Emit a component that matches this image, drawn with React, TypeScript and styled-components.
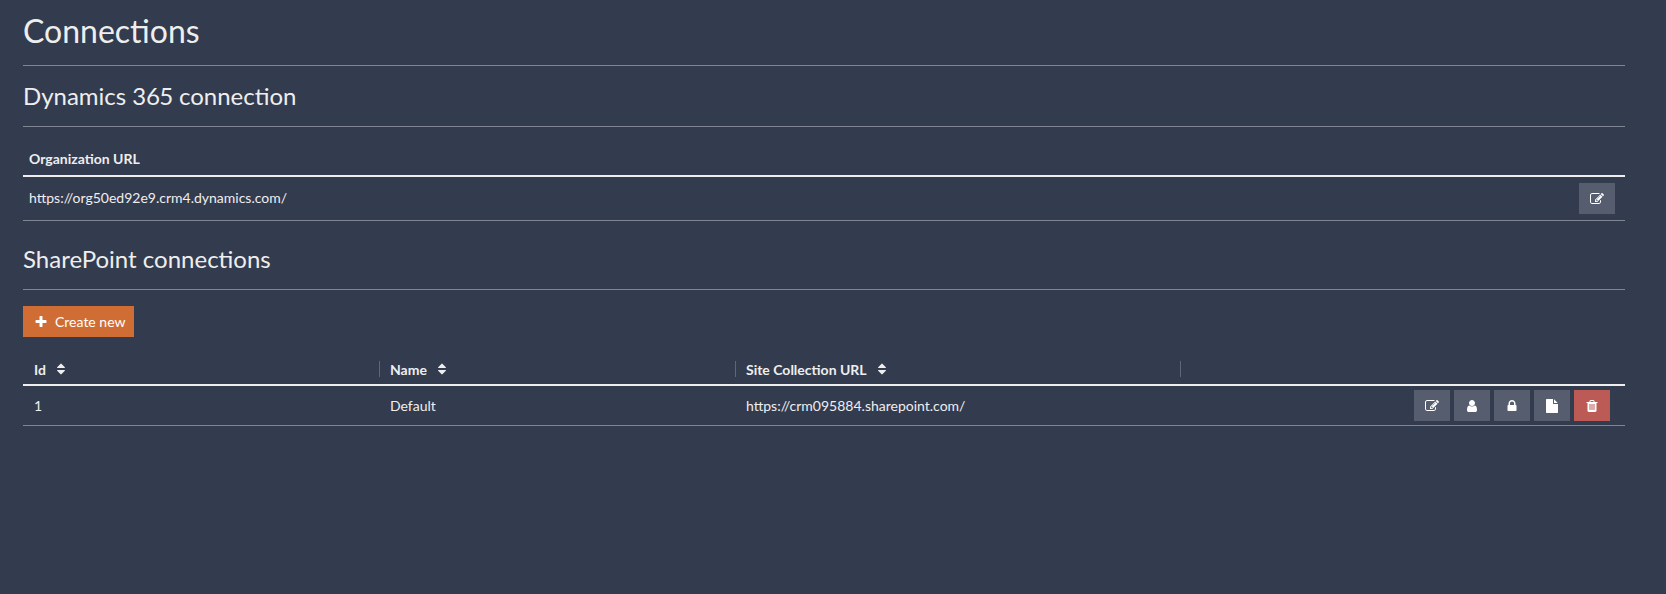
import React from 'react';
import styled, { createGlobalStyle } from 'styled-components';

const GlobalStyle = createGlobalStyle`
  html, body {
    margin: 0;
    padding: 0;
    background: #333b4e;
    color: #eeeeee;
    font-family: Lato, "Open Sans", sans-serif;
    font-size: 14px;
  }
`;

const icons = {
  edit: 'M888 1184l116-116-152-152-116 116v56h96v96h56zm440-720q-16-16-33 1l-350 350q-17 17-1 33t33-1l350-350q17-17 1-33zm80 594v190q0 119-84.5 203.5t-203.5 84.5h-832q-119 0-203.5-84.5t-84.5-203.5v-832q0-119 84.5-203.5t203.5-84.5h832q63 0 117 25 15 7 18 23 3 17-9 29l-49 49q-14 14-32 8-23-6-45-6h-832q-66 0-113 47t-47 113v832q0 66 47 113t113 47h832q66 0 113-47t47-113v-126q0-13 9-22l64-64q15-15 35-7t20 29zm-96-738l288 288-672 672h-288v-288zm444 132l-92 92-288-288 92-92q28-28 68-28t68 28l152 152q28 28 28 68t-28 68z',
  user: 'M1536 1399q0 109-62.5 187t-150.5 78h-854q-88 0-150.5-78t-62.5-187q0-85 8.5-160.5t31.5-152 58.5-131 94-89 134.5-34.5q131 128 313 128t313-128q76 0 134.5 34.5t94 89 58.5 131 31.5 152 8.5 160.5zm-256-887q0 159-112.5 271.5t-271.5 112.5-271.5-112.5-112.5-271.5 112.5-271.5 271.5-112.5 271.5 112.5 112.5 271.5z',
  lock: 'M640 768h512v-192q0-106-75-181t-181-75-181 75-75 181v192zm832 96v576q0 40-28 68t-68 28h-960q-40 0-68-28t-28-68v-576q0-40 28-68t68-28h32v-192q0-184 132-316t316-132 316 132 132 316v192h32q40 0 68 28t28 68z',
  file: 'M1152 512v-472q22 14 36 28l408 408q14 14 28 36h-472zm-128 32q0 40 28 68t68 28h544v1056q0 40-28 68t-68 28h-1344q-40 0-68-28t-28-68v-1600q0-40 28-68t68-28h800v544z',
  trash: 'M704 1376v-704q0-14-9-23t-23-9h-64q-14 0-23 9t-9 23v704q0 14 9 23t23 9h64q14 0 23-9t9-23zm256 0v-704q0-14-9-23t-23-9h-64q-14 0-23 9t-9 23v704q0 14 9 23t23 9h64q14 0 23-9t9-23zm256 0v-704q0-14-9-23t-23-9h-64q-14 0-23 9t-9 23v704q0 14 9 23t23 9h64q14 0 23-9t9-23zm-544-992h448l-48-117q-7-9-17-11h-317q-10 2-17 11zm928 32v64q0 14-9 23t-23 9h-96v948q0 83-47 143.5t-113 60.5h-832q-66 0-113-58.5t-47-141.5v-952h-96q-14 0-23-9t-9-23v-64q0-14 9-23t23-9h309l70-167q15-37 54-63t79-26h320q40 0 79 26t54 63l70 167h309q14 0 23 9t9 23z',
  plus: 'M1600 736v192q0 40-28 68t-68 28h-416v416q0 40-28 68t-68 28h-192q-40 0-68-28t-28-68v-416h-416q-40 0-68-28t-28-68v-192q0-40 28-68t68-28h416v-416q0-40 28-68t68-28h192q40 0 68 28t28 68v416h416q40 0 68 28t28 68z',
  sort: 'M1408 1088q0 26-19 45l-448 448q-19 19-45 19t-45-19l-448-448q-19-19-19-45t19-45 45-19h896q26 0 45 19t19 45zm0-384q0 26-19 45t-45 19h-896q-26 0-45-19t-19-45 19-45l448-448q19-19 45-19t45 19l448 448q19 19 19 45z',
};

const Svg = styled.svg`
  width: 14px;
  height: 14px;
  flex: none;
  fill: currentColor;
`;

const Icon = ({ name }: { name: keyof typeof icons }) => (
  <Svg viewBox="0 0 1792 1792"><path d={icons[name]} /></Svg>
);

const Page = styled.div`
  height: 594px;
  box-sizing: border-box;
  padding: 0 41px 0 23px;
  overflow: hidden;
`;

const Title = styled.h1`
  margin: 0;
  height: 66px;
  box-sizing: border-box;
  padding-top: 11px;
  font-size: 32px;
  line-height: 40px;
  font-weight: 400;
  border-bottom: 1px solid #7f8691;
`;

const SectionTitle = styled.h2<{ $top: number; $h: number }>`
  margin: 0;
  box-sizing: border-box;
  height: ${(p) => p.$h}px;
  padding-top: ${(p) => p.$top}px;
  font-size: 24px;
  line-height: 32px;
  font-weight: 400;
  font-variant-numeric: proportional-nums;
  border-bottom: 1px solid #7f8691;
`;

const Table = styled.table`
  width: 100%;
  border-collapse: separate;
  border-spacing: 0;
  table-layout: fixed;
`;

const HeadCell = styled.th`
  height: 40px;
  padding: 0 0 7px;
  text-align: left;
  font-size: 14px;
  line-height: 17px;
  font-weight: 700;
  border-bottom: 2px solid #eeeeee;
  vertical-align: bottom;
`;

const HeadInner = styled.div`
  display: flex;
  align-items: center;
  gap: 8px;
  height: 16px;
  margin-right: -1px;
  padding-left: 11px;
  border-right: 1px solid #5f6675;
`;

const PlainHead = styled(HeadCell)`
  height: 40px;
  padding: 0 0 8px 6px;
`;

const Cell = styled.td`
  box-sizing: border-box;
  padding: 0 0 0 11px;
  height: 40px;
  font-size: 14px;
  border-bottom: 1px solid #7f8691;
  vertical-align: middle;
`;

const UrlCell = styled(Cell)`
  height: 44px;
  padding: 0 0 2px 6px;
`;

const ActionCell = styled(Cell)`
  padding: 0 15px 0 0;
`;

const EditCell = styled(UrlCell)`
  padding: 0 10px 0 0;
`;

const Actions = styled.div`
  display: flex;
  justify-content: flex-end;
  gap: 4px;
`;

const IconButton = styled.button<{ $danger?: boolean }>`
  display: flex;
  align-items: center;
  justify-content: center;
  width: 36px;
  height: 31px;
  padding: 0;
  border: 0;
  color: #ffffff;
  background: ${(p) => (p.$danger ? '#bc5b55' : '#555d6e')};
`;

const Toolbar = styled.div`
  display: flex;
  padding-top: 16px;
`;

const CreateButton = styled.button`
  display: inline-flex;
  align-items: center;
  gap: 7px;
  height: 31px;
  padding: 0 9px 0 11px;
  border: 0;
  background: #cf6d35;
  color: #ffffff;
  font-family: inherit;
  font-size: 14px;
`;

const sharePointColumns = ['Id', 'Name', 'Site Collection URL'];
const columnWidths = [356, 356, 445, undefined];

const App = () => {
  return (
    <Page>
      <GlobalStyle />
      <Title>Connections</Title>
      <SectionTitle $top={14} $h={61}>Dynamics 365 connection</SectionTitle>
      <Table>
        <colgroup>
          <col />
          <col width={60} />
        </colgroup>
        <thead>
          <tr>
            <PlainHead>Organization URL</PlainHead>
            <PlainHead />
          </tr>
        </thead>
        <tbody>
          <tr>
            <UrlCell>https://org50ed92e9.crm4.dynamics.com/</UrlCell>
            <EditCell>
              <Actions>
                <IconButton><Icon name="edit" /></IconButton>
              </Actions>
            </EditCell>
          </tr>
        </tbody>
      </Table>
      <SectionTitle $top={22} $h={69}>SharePoint connections</SectionTitle>
      <Toolbar>
        <CreateButton><Icon name="plus" />Create new</CreateButton>
      </Toolbar>
      <Table>
        <colgroup>
          {columnWidths.map((w, i) => <col key={i} width={w} />)}
        </colgroup>
        <thead>
          <tr>
            {sharePointColumns.map((c) => (
              <HeadCell key={c}>
                <HeadInner>{c} <Icon name="sort" /></HeadInner>
              </HeadCell>
            ))}
            <HeadCell />
          </tr>
        </thead>
        <tbody>
          <tr>
            <Cell>1</Cell>
            <Cell>Default</Cell>
            <Cell>https://crm095884.sharepoint.com/</Cell>
            <ActionCell>
              <Actions>
                <IconButton><Icon name="edit" /></IconButton>
                <IconButton><Icon name="user" /></IconButton>
                <IconButton><Icon name="lock" /></IconButton>
                <IconButton><Icon name="file" /></IconButton>
                <IconButton $danger><Icon name="trash" /></IconButton>
              </Actions>
            </ActionCell>
          </tr>
        </tbody>
      </Table>
    </Page>
  );
};

export default App;
